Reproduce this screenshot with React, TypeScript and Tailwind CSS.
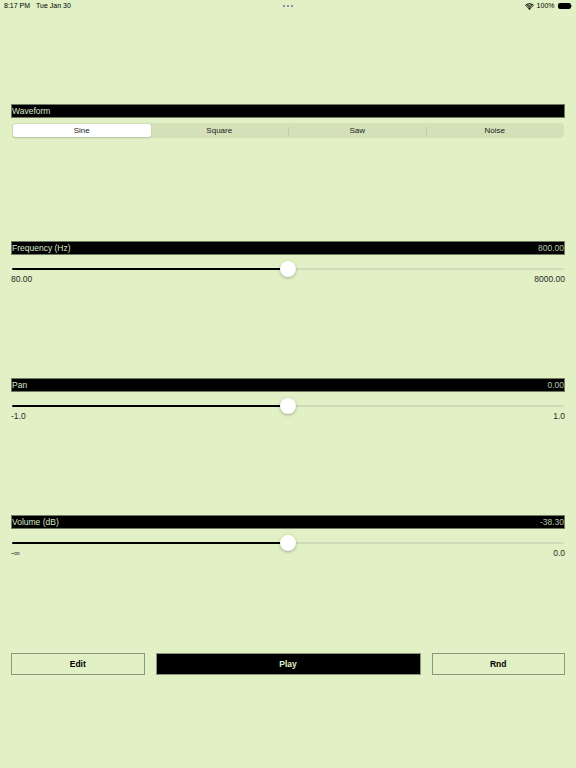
const segments = ["Sine", "Square", "Saw", "Noise"];

function StatusBar() {
  return (
    <div className="flex h-[12px] items-center justify-between px-[4px] text-[7px] font-medium text-black">
      <div className="flex w-[120px] gap-[6px]">
        <span>8:17 PM</span>
        <span>Tue Jan 30</span>
      </div>
      <div className="flex gap-[2px]">
        <span className="size-[2px] rounded-full bg-gray-500" />
        <span className="size-[2px] rounded-full bg-gray-500" />
        <span className="size-[2px] rounded-full bg-gray-500" />
      </div>
      <div className="flex w-[120px] items-center justify-end gap-[3px]">
        <svg width="9" height="7" viewBox="0 0 18 14" fill="black">
          <path d="M9 14 L6.2 10.8 A4 4 0 0 1 11.8 10.8 Z" />
          <path d="M4.3 8.8 A6.7 6.7 0 0 1 13.7 8.8 L12.4 10.1 A4.9 4.9 0 0 0 5.6 10.1 Z" />
          <path d="M2.2 6.6 A9.7 9.7 0 0 1 15.8 6.6 L14.5 7.9 A7.9 7.9 0 0 0 3.5 7.9 Z" />
          <path d="M0 4.4 A12.7 12.7 0 0 1 18 4.4 L16.7 5.7 A10.9 10.9 0 0 0 1.3 5.7 Z" />
        </svg>
        <span>100%</span>
        <div className="flex items-center">
          <div className="h-[6px] w-[13px] rounded-[2px] bg-black" />
          <div className="ml-[0.5px] h-[2px] w-[1px] rounded-r bg-gray-500" />
        </div>
      </div>
    </div>
  );
}

function Header({ label, value }: { label: string; value?: string }) {
  return (
    <div className="flex h-[14px] items-center justify-between border border-[#6f7a62] bg-black text-[8.5px] leading-none text-[#dbe6cb]">
      <span>{label}</span>
      {value && <span className="text-[#b9c2ad]">{value}</span>}
    </div>
  );
}

function Slider({ min, max }: { min: string; max: string }) {
  return (
    <div className="mt-[8px]">
      <div className="relative mx-[1px] flex h-[11px] items-center">
        <div className="h-[2px] w-1/2 rounded-l-full bg-black" />
        <div className="h-[2px] w-1/2 rounded-r-full bg-[#cfdcb8]" />
        <div className="absolute left-1/2 top-1/2 size-[16px] -translate-x-1/2 -translate-y-1/2 rounded-full bg-white shadow-[0_1px_3px_rgba(0,0,0,0.3)]" />
      </div>
      <div className="flex h-[11px] items-center justify-between text-[8.5px] text-[#2b2b2b]">
        <span>{min}</span>
        <span>{max}</span>
      </div>
    </div>
  );
}

export default function App() {
  return (
    <div
      className="h-[768px] w-[576px] bg-[#e1f1c5]"
      style={{ fontFamily: '"Liberation Sans", Arial, sans-serif' }}
    >
      <StatusBar />
      <div className="px-[11px]">
        <div className="mt-[92px]">
          <Header label="Waveform" />
        </div>
        <div className="mx-[1px] mt-[5px] flex h-[15px] items-center rounded-[4px] bg-[#d3e0b8] p-[1px] text-[8px] font-medium text-[#222]">
          {segments.map((s, i) => (
            <div key={s} className="flex h-full flex-1 items-center">
              {i > 1 && <span className="h-[8px] w-px bg-[#bfcca8]" />}
              <div
                className={
                  i === 0
                    ? "flex h-full flex-1 items-center justify-center rounded-[3px] bg-white shadow-[0_1px_2px_rgba(0,0,0,0.15)]"
                    : "flex h-full flex-1 items-center justify-center"
                }
              >
                {s}
              </div>
            </div>
          ))}
        </div>

        <div className="mt-[103px]">
          <Header label="Frequency (Hz)" value="800.00" />
          <Slider min="80.00" max="8000.00" />
        </div>

        <div className="mt-[93px]">
          <Header label="Pan" value="0.00" />
          <Slider min="-1.0" max="1.0" />
        </div>

        <div className="mt-[93px]">
          <Header label="Volume (dB)" value="-38.30" />
          <Slider min="-∞" max="0.0" />
        </div>

        <div className="mt-[94px] flex h-[22px] gap-[11px] text-[8.5px] font-bold">
          <button className="flex flex-1 items-center justify-center border-[1.5px] border-[#8a977a] bg-[#e1f1c5] text-black">
            Edit
          </button>
          <button className="flex flex-[2] items-center justify-center border-[1.5px] border-[#8a977a] bg-black text-[#e1f1c5]">
            Play
          </button>
          <button className="flex flex-1 items-center justify-center border-[1.5px] border-[#8a977a] bg-[#e1f1c5] text-black">
            Rnd
          </button>
        </div>
      </div>
    </div>
  );
}
